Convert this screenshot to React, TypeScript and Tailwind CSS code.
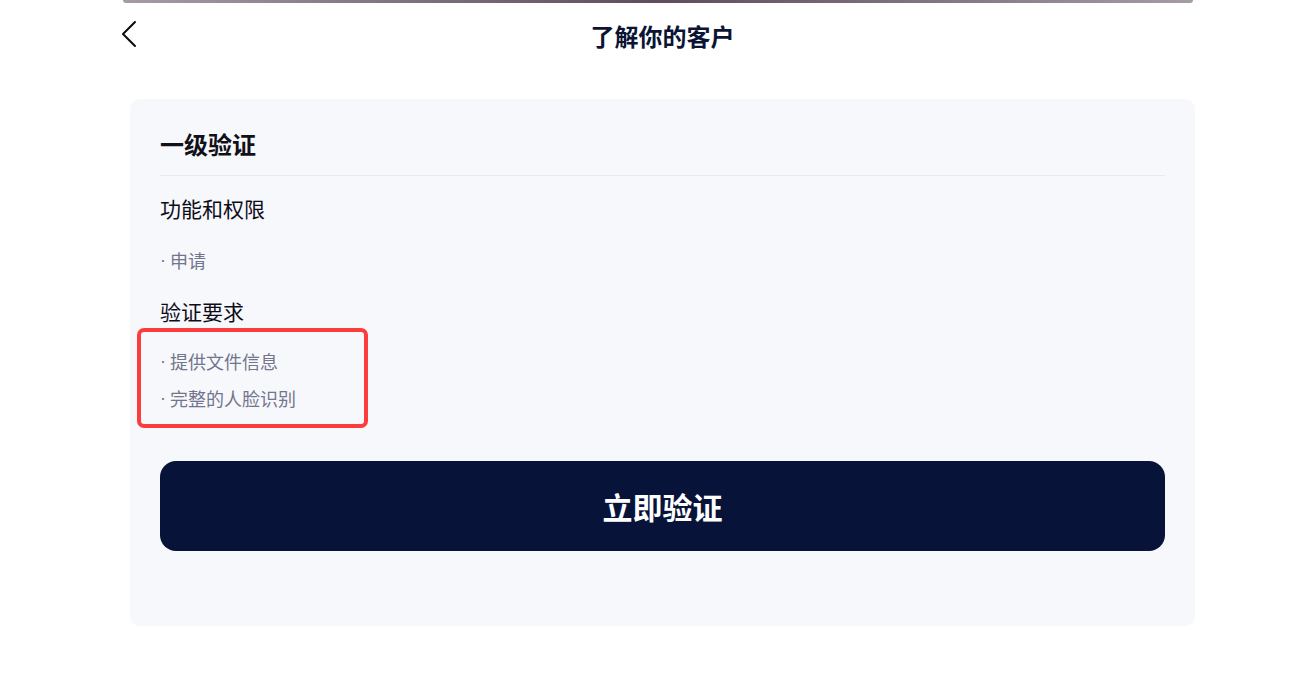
function BackIcon (): JSX.Element {
  return (
    <svg width="18" height="28" viewBox="0 0 18 28" fill="none">
      <path d="M15 2 L3 14 L15 26" stroke="#0a0a14" strokeWidth="2" strokeLinecap="round" strokeLinejoin="round" />
    </svg>
  )
}

function Bullet ({ text }: { text: string }): JSX.Element {
  return (
    <p className="flex h-[26px] items-center text-[18px] leading-[26px] text-[#72758c]">
      <span className="w-[10px] font-['Liberation_Sans',sans-serif]">·</span>
      <span>{text}</span>
    </p>
  )
}

export default function App (): JSX.Element {
  return (
    <div className="min-h-[684px] bg-white font-['Noto_Sans_CJK_SC','Noto_Sans',sans-serif]">
      <div className="ml-[123px] w-[1070px] h-[3px] rounded-b-full bg-gradient-to-r from-[#a59ca6] via-[#5f4d5f] to-[#a59ca6]" />

      <header className="ml-[115px] w-[1095px] h-[66px] grid grid-cols-[1fr_auto_1fr] items-center">
        <button className="justify-self-start ml-[5px] -mt-[4px]">
          <BackIcon />
        </button>
        <h1 className="text-[24px] font-bold text-[#0b1434] leading-[32px]">了解你的客户</h1>
        <div />
      </header>

      <main className="relative ml-[130px] mt-[30px] w-[1065px] rounded-[10px] bg-[#f7f8fc] px-[30px] pt-[29px] pb-[75px]">
        <h2 className="text-[24px] font-bold leading-[32px] text-[#111118]">一级验证</h2>
        <div className="mt-[15px] border-t border-[#e8eaf1]" />

        <h3 className="mt-[17px] text-[21px] leading-[30px] text-[#0d0d1a]">功能和权限</h3>
        <div className="mt-[24px]">
          <Bullet text="申请" />
        </div>

        <h3 className="mt-[23px] text-[21px] leading-[30px] text-[#0d0d1a]">验证要求</h3>
        <div className="mt-[22px] flex flex-col gap-[11px]">
          <Bullet text="提供文件信息" />
          <Bullet text="完整的人脸识别" />
        </div>

        <button className="mt-[50px] w-full h-[90px] rounded-[16px] bg-[#071338] text-white text-[30px] font-bold">
          立即验证
        </button>

        <div className="absolute left-[7px] top-[229px] w-[231px] h-[100px] rounded-[7px] border-4 border-[#fd3c3c]" />
      </main>
    </div>
  )
}
